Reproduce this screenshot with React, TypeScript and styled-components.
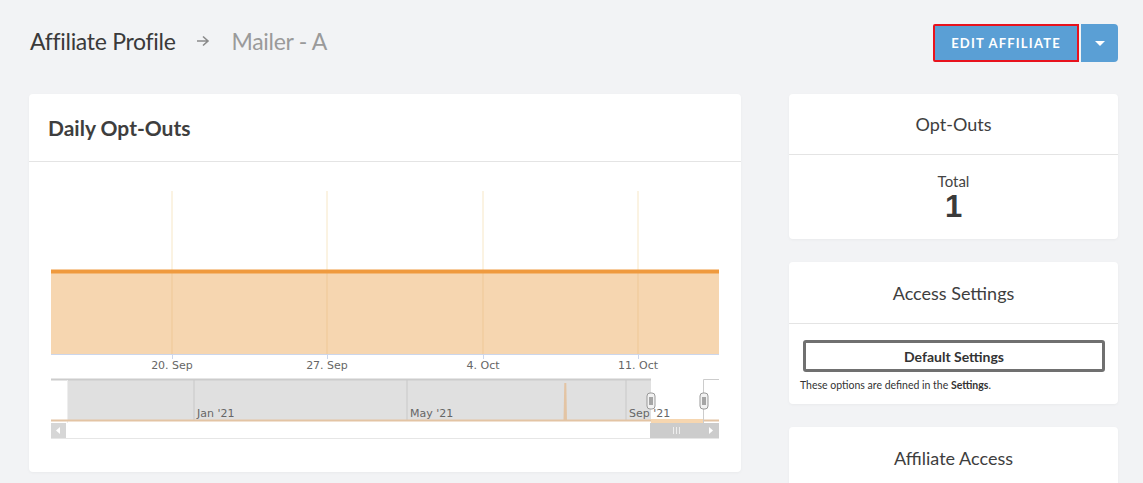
import React, { FC } from "react";
import styled, { createGlobalStyle } from "styled-components";

const GlobalStyle = createGlobalStyle`
  html, body {
    margin: 0;
    padding: 0;
    background: #f2f3f5;
    font-family: Lato, "Noto Sans", sans-serif;
    color: #3d3d3d;
  }
`;

const Page = styled.div`
  width: 1143px;
  height: 483px;
  overflow: hidden;
  padding: 22px 25px 0 30px;
  box-sizing: border-box;
`;

const Header = styled.header`
  display: flex;
  align-items: flex-start;
  justify-content: space-between;
  height: 40px;
`;

const Crumbs = styled.h1`
  display: flex;
  align-items: center;
  height: 38px;
  margin: 0;
  font-weight: 400;
  font-size: 23px;
  letter-spacing: -0.3px;
`;

const Crumb = styled.span<{ $muted?: boolean }>`
  color: ${(p) => (p.$muted ? "#9a9a9a" : "#3a3a3a")};
`;

const Arrow = styled.span`
  display: flex;
  margin: 0 22px 0 20px;
  color: #8a8a8a;
`;

const ButtonGroup = styled.div`
  display: flex;
  gap: 2px;
  margin-top: 2px;
`;

const PrimaryButton = styled.button`
  height: 38px;
  width: 146px;
  box-sizing: border-box;
  border: 2px solid #e8121d;
  background: #5a9fd5;
  color: #fff;
  font-family: inherit;
  font-weight: 700;
  font-size: 13px;
  letter-spacing: 1.2px;
  text-transform: uppercase;
  border-radius: 2px 0 0 2px;
`;

const CaretButton = styled.button`
  height: 38px;
  width: 37px;
  border: none;
  background: #5a9fd5;
  border-radius: 0 4px 4px 0;
  display: flex;
  align-items: center;
  justify-content: center;
  &::after {
    content: "";
    border-left: 5px solid transparent;
    border-right: 5px solid transparent;
    border-top: 5px solid #fff;
  }
`;

const Layout = styled.main`
  display: grid;
  grid-template-columns: 712px 329px;
  column-gap: 48px;
  margin: 32px 0 0 -1px;
  align-items: start;
`;

const Column = styled.div`
  display: flex;
  flex-direction: column;
  gap: 23px;
`;

const Card = styled.section`
  background: #fff;
  border-radius: 4px;
  box-shadow: 0 1px 3px rgba(0, 0, 0, 0.04);
`;

const CardHeader = styled.div<{ $center?: boolean; $h: number }>`
  height: ${(p) => p.$h}px;
  display: flex;
  align-items: center;
  justify-content: ${(p) => (p.$center ? "center" : "flex-start")};
  padding: ${(p) => (p.$center ? "0" : "0 19px")};
  border-bottom: 1px solid #e4e4e4;
`;

const CardTitle = styled.h2<{ $bold?: boolean }>`
  margin: 0;
  font-size: ${(p) => (p.$bold ? "21px" : "18px")};
  font-weight: ${(p) => (p.$bold ? 700 : 400)};
  color: #3e3e3e;
`;

const StatBody = styled.div`
  display: flex;
  flex-direction: column;
  align-items: center;
  padding: 17px 0 16px;
`;

const StatLabel = styled.div`
  font-size: 15px;
  color: #444;
  line-height: 19px;
`;

const StatValue = styled.div`
  font-family: "Liberation Sans", Arial, sans-serif;
  font-weight: 700;
  font-size: 31px;
  line-height: 32px;
  color: #3a3a3a;
`;

const AccessBody = styled.div`
  padding: 16px 14px 13px 11px;
`;

const OutlineButton = styled.button`
  display: block;
  width: 302px;
  height: 32px;
  margin-left: 3px;
  box-sizing: border-box;
  border: 3px solid #707070;
  border-radius: 3px;
  background: #fff;
  font-family: inherit;
  font-weight: 700;
  font-size: 14px;
  color: #333;
`;

const Note = styled.p`
  margin: 7px 0 0;
  font-size: 10.5px;
  color: #333;
  b {
    font-weight: 700;
  }
`;

const ChartWrap = styled.div`
  height: 310px;
  svg {
    display: block;
  }
`;

const dayTicks = [
  { x: 143, label: "20. Sep" },
  { x: 298, label: "27. Sep" },
  { x: 454, label: "4. Oct" },
  { x: 609, label: "11. Oct" },
];

const navTicks = [
  { x: 165, label: "Jan '21" },
  { x: 378, label: "May '21" },
  { x: 597, label: "Sep '21" },
];

const Handle: FC<{ x: number }> = ({ x }) => (
  <g>
    <rect x={x - 4} y={231} width={8} height={16} rx={3} fill="#f2f2f2" stroke="#999" />
    <line x1={x - 1} y1={235} x2={x - 1} y2={243} stroke="#333" strokeWidth={0.8} />
    <line x1={x + 1} y1={235} x2={x + 1} y2={243} stroke="#333" strokeWidth={0.8} />
  </g>
);

const OptOutChart: FC = () => (
  <svg width={712} height={309} fontFamily='"DejaVu Sans", sans-serif'>
    {/* main plot */}
    {dayTicks.map((t) => (
      <line key={t.x} x1={t.x} y1={29} x2={t.x} y2={192} stroke="#f7e7c6" />
    ))}
    <rect x={22} y={109} width={668} height={83} fill="#f6d6b0" />
    {dayTicks.map((t) => (
      <line key={`g${t.x}`} x1={t.x} y1={111} x2={t.x} y2={192} stroke="#efc896" />
    ))}
    <line x1={22} y1={109.5} x2={690} y2={109.5} stroke="#ef9a3e" strokeWidth={4} />
    <line x1={22} y1={192.5} x2={690} y2={192.5} stroke="#ccd6eb" />
    {dayTicks.map((t) => (
      <g key={`l${t.x}`}>
        <line x1={t.x + 0.5} y1={192} x2={t.x + 0.5} y2={197} stroke="#ccd6eb" />
        <text x={t.x} y={207} fontSize={11} fill="#666" textAnchor="middle">
          {t.label}
        </text>
      </g>
    ))}

    {/* navigator */}
    <rect x={38} y={218} width={584} height={40} fill="#e0e0e0" />
    <line x1={22} y1={217.5} x2={622} y2={217.5} stroke="#cccccc" strokeWidth={2} />
    <line x1={38.5} y1={218} x2={38.5} y2={261} stroke="#eeeeee" />
    {navTicks.map((t) => (
      <g key={t.x}>
        <line x1={t.x} y1={218} x2={t.x} y2={258} stroke="#c8c8c8" />
        <text x={t.x + 3} y={255} fontSize={11} fill="#666">
          {t.label}
        </text>
      </g>
    ))}
    <path d="M22 258.5 H535.5 L536.3 221 L537 258.5 H690" fill="none" stroke="#e3c4a4" strokeWidth={2} />
    <rect x={622} y={257} width={52} height={4} fill="#f6d6b0" />
    <path d="M674.5 262 V217.5 H690" fill="none" stroke="#cccccc" />

    {/* scrollbar */}
    <rect x={22} y={261} width={668} height={15} fill="#fff" />
    <line x1={22} y1={276.5} x2={690} y2={276.5} stroke="#e6e6e6" />
    <rect x={22} y={261} width={15} height={15} fill="#d6d6d6" />
    <path d="M31 265 L27 268.5 L31 272 Z" fill="#fff" />
    <rect x={621} y={261} width={69} height={15} fill="#cccccc" />
    <g stroke="#eee" strokeWidth={1}>
      <line x1={644.5} y1={265} x2={644.5} y2={272} />
      <line x1={647.5} y1={265} x2={647.5} y2={272} />
      <line x1={650.5} y1={265} x2={650.5} y2={272} />
    </g>
    <path d="M680 265 L684 268.5 L680 272 Z" fill="#fff" />

    <Handle x={622} />
    <Handle x={675} />
  </svg>
);

const App: FC = () => (
  <>
    <GlobalStyle />
    <Page>
      <Header>
        <Crumbs>
          <Crumb>Affiliate Profile</Crumb>
          <Arrow>
            <svg width="14" height="12" viewBox="0 0 14 12" fill="none" stroke="currentColor" strokeWidth="1.6">
              <path d="M1 6 H12 M7 1.5 L12 6 L7 10.5" />
            </svg>
          </Arrow>
          <Crumb $muted>Mailer - A</Crumb>
        </Crumbs>
        <ButtonGroup>
          <PrimaryButton>Edit Affiliate</PrimaryButton>
          <CaretButton aria-label="More" />
        </ButtonGroup>
      </Header>

      <Layout>
        <Card>
          <CardHeader $h={67}>
            <CardTitle $bold>Daily Opt-Outs</CardTitle>
          </CardHeader>
          <ChartWrap>
            <OptOutChart />
          </ChartWrap>
        </Card>

        <Column>
          <Card>
            <CardHeader $center $h={60}>
              <CardTitle>Opt-Outs</CardTitle>
            </CardHeader>
            <StatBody>
              <StatLabel>Total</StatLabel>
              <StatValue>1</StatValue>
            </StatBody>
          </Card>
          <Card>
            <CardHeader $center $h={61}>
              <CardTitle>Access Settings</CardTitle>
            </CardHeader>
            <AccessBody>
              <OutlineButton>Default Settings</OutlineButton>
              <Note>
                These options are defined in the <b>Settings</b>.
              </Note>
            </AccessBody>
          </Card>
          <Card>
            <CardHeader $center $h={61}>
              <CardTitle>Affiliate Access</CardTitle>
            </CardHeader>
            <AccessBody />
          </Card>
        </Column>
      </Layout>
    </Page>
  </>
);

export default App;
